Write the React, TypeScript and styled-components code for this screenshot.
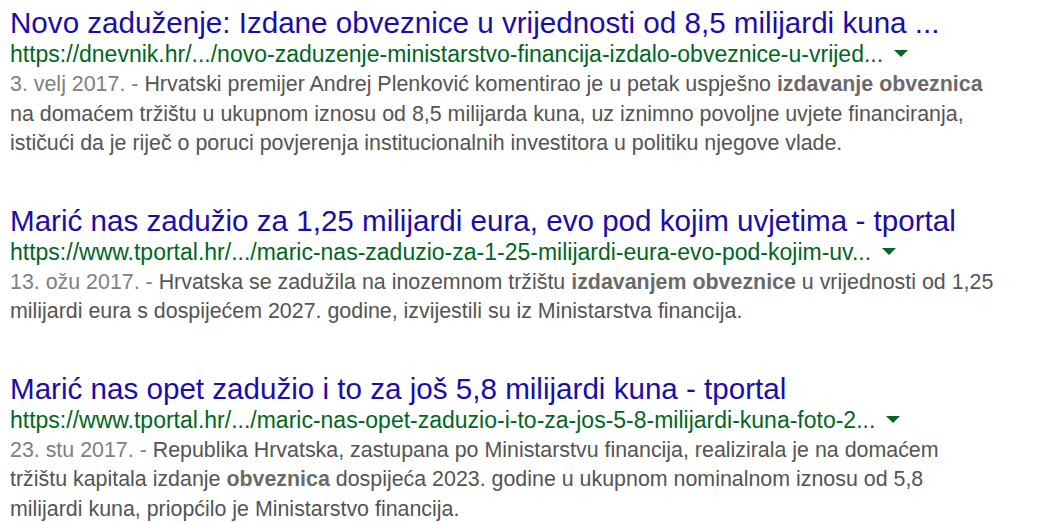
import { createGlobalStyle } from "styled-components";
import styled from "styled-components";

const Global = createGlobalStyle`
  html, body { margin: 0; padding: 0; background: #fff; }
  body { font-family: "Liberation Sans", Arial, sans-serif; }
`;

const List = styled.div`
  padding: 7px 0 0 10px;
  display: flex; flex-direction: column; gap: 46px;
`;
const Result = styled.div` display: flex; flex-direction: column; `;
const Title = styled.a`
  color: #1a0dab; font-size: 29.6px; line-height: 32px;
  text-decoration: none; white-space: nowrap;
`;
const UrlRow = styled.div`
  display: flex; align-items: center; gap: 11px;
  color: #006621; font-size: 23px; line-height: 31px; white-space: nowrap;
`;
const Arrow = styled.span`
  width: 0; height: 0;
  border-left: 7px solid transparent; border-right: 7px solid transparent;
  border-top: 7px solid #006621; margin-top: -2px;
`;
const Snippet = styled.div`
  color: #545454; font-size: 21.4px; line-height: 29.5px;
  b { font-weight: bold; color: #6a6a6a; }
`;
const DateText = styled.span` color: #808080; `;

type Item = { title: string; url: string; date: string; lines: React.ReactNode[] };

const items: Item[] = [
  {
    title: "Novo zaduženje: Izdane obveznice u vrijednosti od 8,5 milijardi kuna ...",
    url: "https://dnevnik.hr/.../novo-zaduzenje-ministarstvo-financija-izdalo-obveznice-u-vrijed...",
    date: "3. velj 2017. - ",
    lines: [
      <>Hrvatski premijer Andrej Plenković komentirao je u petak uspješno <b>izdavanje obveznica</b></>,
      <>na domaćem tržištu u ukupnom iznosu od 8,5 milijarda kuna, uz iznimno povoljne uvjete financiranja,</>,
      <>ističući da je riječ o poruci povjerenja institucionalnih investitora u politiku njegove vlade.</>,
    ],
  },
  {
    title: "Marić nas zadužio za 1,25 milijardi eura, evo pod kojim uvjetima - tportal",
    url: "https://www.tportal.hr/.../maric-nas-zaduzio-za-1-25-milijardi-eura-evo-pod-kojim-uv...",
    date: "13. ožu 2017. - ",
    lines: [
      <>Hrvatska se zadužila na inozemnom tržištu <b>izdavanjem obveznice</b> u vrijednosti od 1,25</>,
      <>milijardi eura s dospijećem 2027. godine, izvijestili su iz Ministarstva financija.</>,
    ],
  },
  {
    title: "Marić nas opet zadužio i to za još 5,8 milijardi kuna - tportal",
    url: "https://www.tportal.hr/.../maric-nas-opet-zaduzio-i-to-za-jos-5-8-milijardi-kuna-foto-2...",
    date: "23. stu 2017. - ",
    lines: [
      <>Republika Hrvatska, zastupana po Ministarstvu financija, realizirala je na domaćem</>,
      <>tržištu kapitala izdanje <b>obveznica</b> dospijeća 2023. godine u ukupnom nominalnom iznosu od 5,8</>,
      <>milijardi kuna, priopćilo je Ministarstvo financija.</>,
    ],
  },
];

export default function App() {
  return (
    <>
      <Global />
      <List>
        {items.map((it) => (
          <Result key={it.title}>
            <Title href="#">{it.title}</Title>
            <UrlRow>
              <span>{it.url}</span>
              <Arrow />
            </UrlRow>
            <Snippet>
              {it.lines.map((l, i) => (
                <div key={i}>
                  {i === 0 && <DateText>{it.date}</DateText>}
                  {l}
                </div>
              ))}
            </Snippet>
          </Result>
        ))}
      </List>
    </>
  );
}
